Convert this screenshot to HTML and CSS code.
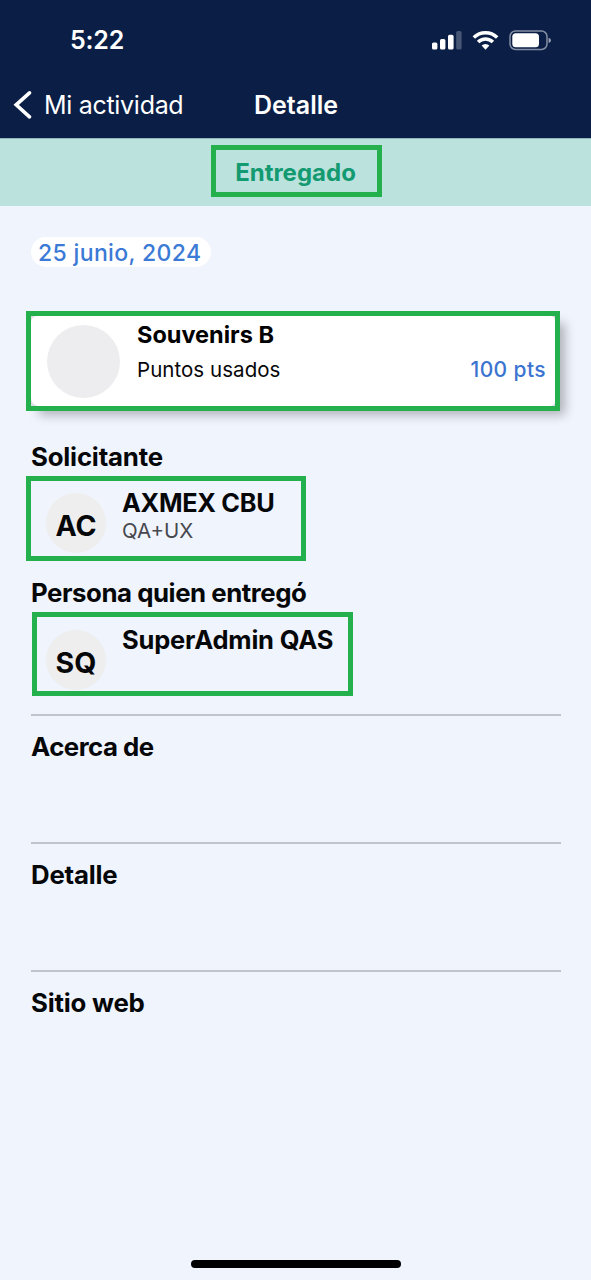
FILE: index.html
```
<!DOCTYPE html>
<html lang="es">
<head>
<meta charset="utf-8">
<meta name="viewport" content="width=device-width, initial-scale=1">
<title>Detalle</title>
<link rel="stylesheet" href="styles.css">
</head>
<body>
<header class="header">
  <div class="status-bar">
    <span class="clock">5:22</span>
    <svg class="status-icons" width="122" height="24" viewBox="0 0 122 24">
      <g fill="#fff">
        <rect x="2" y="15.500" width="5.400" height="7" rx="1.600"/>
        <rect x="10" y="12" width="5.400" height="10.500" rx="1.600"/>
        <rect x="18" y="7.800" width="5.600" height="14.700" rx="1.600"/>
        <rect x="26.200" y="4" width="5.400" height="18.500" rx="1.600" opacity=".25"/>
        <path d="M55.500 22.800l-3.900-4.200a5.600 5.600 0 0 1 7.800 0z"/>
      </g>
      <g fill="none" stroke="#fff" stroke-width="3.500">
        <path d="M43.800 10.400a16.800 16.800 0 0 1 23.400 0"/>
        <path d="M48.100 14.900a10.600 10.600 0 0 1 14.800 0"/>
      </g>
      <rect x="80" y="4" width="37" height="18.500" rx="5.500" fill="none" stroke="#fff" stroke-opacity=".5" stroke-width="1.500"/>
      <rect x="82.300" y="6.300" width="26.700" height="14" rx="3.500" fill="#fff"/>
      <path d="M118.600 10.800q2.400 .8 2.400 2.600t-2.400 2.600z" fill="#fff" opacity=".6"/>
    </svg>
  </div>
  <nav class="nav">
    <svg class="back-icon" width="20" height="32" viewBox="0 0 20 32"><path d="M17.500 3.800L4.200 15.800L17.500 27.800" fill="none" stroke="#fff" stroke-width="3.600" stroke-linecap="round" stroke-linejoin="miter"/></svg>
    <span class="back-label">Mi actividad</span>
    <h1 class="title">Detalle</h1>
  </nav>
</header>
<div class="banner"><div class="banner-frame"><span class="state">Entregado</span></div></div>
<main class="content">
  <div class="date">25 junio, 2024</div>
  <section class="reward-frame">
    <div class="reward">
      <div class="reward-image"></div>
      <div class="reward-info">
        <div class="reward-name">Souvenirs B</div>
        <div class="reward-row"><span class="used">Puntos usados</span><span class="points">100 pts</span></div>
      </div>
    </div>
  </section>
  <h2 class="heading heading-applicant">Solicitante</h2>
  <section class="person">
    <div class="avatar">AC</div>
    <div class="person-info"><span class="person-name">AXMEX CBU</span><span class="person-role">QA+UX</span></div>
  </section>
  <h2 class="heading heading-giver">Persona quien entregó</h2>
  <section class="person person-giver">
    <div class="avatar">SQ</div>
    <div class="person-info"><span class="person-name admin">SuperAdmin QAS</span></div>
  </section>
  <section class="block"><h2 class="heading about">Acerca de</h2></section>
  <section class="block"><h2 class="heading">Detalle</h2></section>
  <section class="block"><h2 class="heading">Sitio web</h2></section>
</main>
<footer class="footer"><div class="home-bar"></div></footer>
</body>
</html>
```
FILE: styles.css
```
* { box-sizing: border-box; }
body {
  margin: 0;
  min-height: 1280px;
  display: flex;
  flex-direction: column;
  background: #f0f4fd;
  color: #060709;
  font-family: Inter, "Liberation Sans", sans-serif;
}
h1, h2 { margin: 0; }
.header { height: 138px; background: #0a1e46; color: #fff; }
.status-bar {
  height: 78px;
  padding: 2px 39px 0 70px;
  display: flex;
  align-items: center;
  justify-content: space-between;
}
.clock { font-size: 25px; font-weight: 600; letter-spacing: -0.2px; }
.status-icons { margin-top: -3px; }
.nav {
  height: 54px;
  padding-left: 12px;
  display: flex;
  align-items: center;
  font-size: 25px;
}
.back-label { width: 140px; margin-left: 12px; letter-spacing: -0.3px; white-space: nowrap; }
.title { margin-left: 70px; font-size: 25px; font-weight: 600; }
.banner {
  height: 68px;
  padding-top: 6px;
  border-top: 1px solid #8fb5bd;
  background: #bce2de;
  display: flex;
  justify-content: center;
  align-items: flex-start;
}
.banner-frame {
  width: 171px;
  height: 52px;
  margin-left: 2px;
  border: 5px solid #25b04e;
  display: flex;
  align-items: center;
  justify-content: center;
}
.state { padding: 2px 2px 0 0; color: #139a71; font-size: 24px; font-weight: 700; }
.content { padding: 31px 31px 0; flex: 1; }
.date {
  width: 180px;
  height: 30px;
  border-radius: 15px;
  background: #fff;
  color: #3b7ad6;
  display: flex;
  align-items: center;
  padding: 1px 0 0 7px;
  font-size: 23px;
  font-weight: 550;
  letter-spacing: 0.35px;
  white-space: nowrap;
}
.reward-frame {
  height: 100px;
  margin: 44px 0 0 -5px;
  width: 534px;
  border: 5px solid #25b04e;
  background: #dcdfe6;
  box-shadow: 9px 8px 10px -4px #00000045;
}
.reward {
  height: 90px;
  padding: 0 10px 0 16px;
  border-radius: 6px 5px 5px 8px;
  background: #fff;
  display: flex;
}
.reward-image { width: 73px; height: 73px; margin-top: 9px; border-radius: 50%; background: #ededef; }
.reward-info { flex: 1; margin-left: 17px; }
.reward-name { margin-top: 5px; line-height: 28px; font-size: 23.500px; font-weight: 700; color: #000; }
.reward-row { margin-top: 7px; line-height: 28px; display: flex; justify-content: space-between; font-size: 20.500px; }
.used { letter-spacing: 0.05px; }
.points { color: #3b74d0; font-size: 21px; font-weight: 550; letter-spacing: 0.4px; margin-right: -1px; }
.heading { line-height: 32px; font-size: 25.800px; font-weight: 650; letter-spacing: -0.2px; }
.heading-applicant { margin-top: 30px; }
.person {
  width: 280px;
  height: 85px;
  margin: 3px 0 0 -5px;
  padding: 12px 0 0 15px;
  border: 5px solid #25b04e;
  display: flex;
}
.avatar {
  width: 60px;
  height: 60px;
  padding-top: 4px;
  border-radius: 50%;
  background: #eeeeef;
  display: flex;
  align-items: center;
  justify-content: center;
  font-size: 28.500px;
  font-weight: 650;
}
.person-info { margin: -6px 0 0 16px; display: flex; flex-direction: column; align-items: flex-start; white-space: nowrap; }
.person-name { line-height: 32px; font-size: 25.300px; font-weight: 650; letter-spacing: -0.3px; }
.person-role { line-height: 24px; font-size: 20.500px; color: #46484d; }
.heading-giver { margin-top: 16px; letter-spacing: -0.450px; }
.about { letter-spacing: -0.5px; }
.admin { font-size: 25.500px; letter-spacing: -0.200px; }
.person-giver { width: 321px; height: 84px; margin-left: 1px; padding: 13px 0 0 9px; }
.block { width: 530px; height: 128px; padding-top: 15px; border-top: 2px solid #c0c4cf; }
.person-giver + .block { margin-top: 18px; }
.footer { height: 20px; display: flex; justify-content: center; }
.home-bar { width: 210px; height: 8px; border-radius: 4px; background: #000; }
```
